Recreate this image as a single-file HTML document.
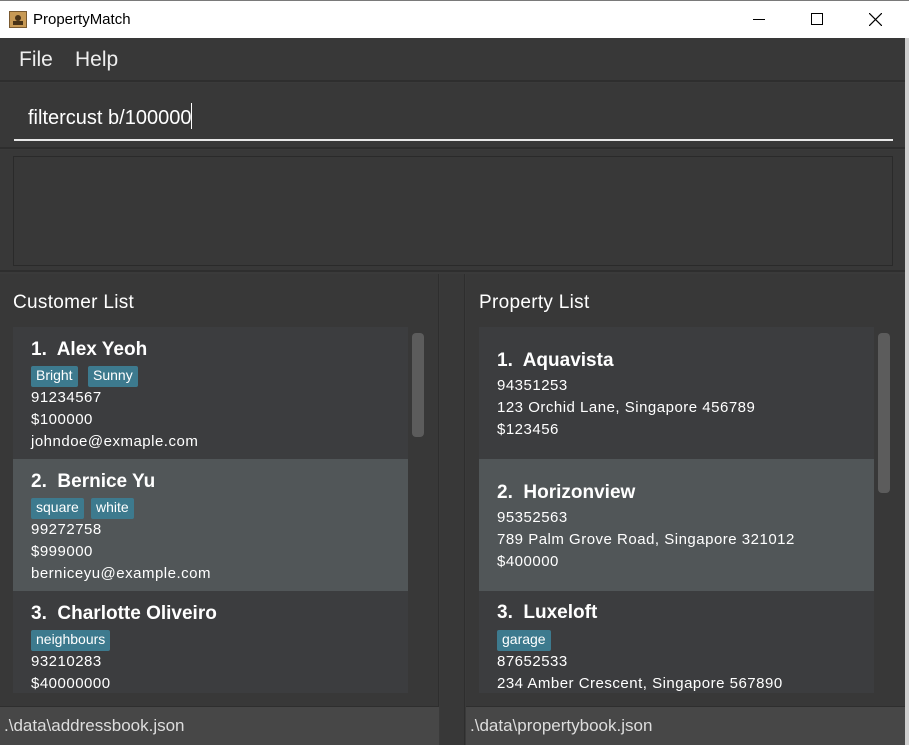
<!DOCTYPE html>
<html><head><meta charset="utf-8"><style>
*{margin:0;padding:0;box-sizing:border-box}
body{width:909px;height:745px;background:#3a3a3a;font-family:"Liberation Sans",sans-serif;position:relative;overflow:hidden;color:#fff}
.a{position:absolute}
.title{left:0;top:0;width:909px;height:38px;background:#fff;border-top:1px solid #7a7a7a}
.menu{left:0;top:38px;width:905px;height:44px;background:#383838;border-bottom:2px solid #2e2e2e}
.cmd{left:0;top:83px;width:905px;height:66px;background:#383838;border-bottom:2px solid #2e2e2e}
.res{left:0;top:150px;width:905px;height:122px;background:#383838;border-bottom:2px solid #2e2e2e}
.panel{top:274px;height:432px;background:#383838}
.list{background:#3c3d3f;overflow:hidden}
.card{position:absolute;left:0;width:395px;height:132px}
.sel{background:#515658}
.nm{position:absolute;left:18px;font-weight:bold;font-size:19px;color:#fff}
.ln{position:absolute;left:18px;font-size:15px;letter-spacing:0.5px;color:#fff}
.tag{position:absolute;height:21px;background:#3d7a8e;border-radius:2px;font-size:14px;padding:1px 5px;color:#fff}
.sb{background:#5c5c5c;border-radius:4px;width:12px}
.status{top:706px;height:39px;background:#474747;font-size:17px;color:#ddd;padding:9px 0 0 4px;border-top:1px solid #2e2e2e}
</style></head><body>
<div class="a title">
 <div class="a" style="left:9px;top:10px;width:18px;height:17px;background:#c89a55;border:1px solid #7a5a30"><div class="a" style="left:5px;top:3px;width:6px;height:6px;background:#4a3418;border-radius:50%"></div><div class="a" style="left:3px;top:9px;width:10px;height:4px;background:#4a3418"></div></div>
 <div class="a" style="left:33px;top:10px;font-size:15px;color:#000">PropertyMatch</div>
 <div class="a" style="left:753px;top:18px;width:12px;height:1px;background:#000"></div>
 <div class="a" style="left:811px;top:12px;width:12px;height:12px;border:1px solid #000"></div>
 <svg class="a" style="left:869px;top:12px" width="13" height="13"><path d="M0 0L13 13M13 0L0 13" stroke="#000" stroke-width="1.2"/></svg>
</div>
<div class="a" style="left:905px;top:38px;width:4px;height:707px;background:#cfcfcf"></div>
<div class="a menu"><span class="a" style="left:19px;top:10px;font-size:21px;color:#eee">File</span><span class="a" style="left:75px;top:10px;font-size:21px;color:#eee">Help</span></div>
<div class="a cmd">
 <div class="a" style="left:28px;top:20px;font-size:20px;color:#fff">filtercust b/100000<span style="display:inline-block;width:1px;height:26px;background:#fff;vertical-align:-5px"></span></div>
 <div class="a" style="left:14px;top:56px;width:879px;height:2px;background:#e8e8e8"></div>
</div>
<div class="a res"><div class="a" style="left:13px;top:6px;width:880px;height:110px;border:1px solid #2a2a2a;background:#383838"></div></div>

<div class="a panel" style="left:0;width:439px;border-right:1px solid #2e2e2e">
 <div class="a" style="left:13px;top:18px;font-size:19px;letter-spacing:0.3px;color:#fff">Customer List</div>
 <div class="a list" style="left:13px;top:53px;width:395px;height:366px">
  <div class="card" style="top:0">
   <div class="nm" style="top:12px">1.&nbsp; Alex Yeoh</div>
   <div class="tag" style="left:18px;top:39px">Bright</div><div class="tag" style="left:75px;top:39px">Sunny</div>
   <div class="ln" style="top:62px">91234567</div><div class="ln" style="top:84px">$100000</div><div class="ln" style="top:106px">johndoe@exmaple.com</div>
  </div>
  <div class="card sel" style="top:132px">
   <div class="nm" style="top:12px">2.&nbsp; Bernice Yu</div>
   <div class="tag" style="left:18px;top:39px">square</div><div class="tag" style="left:78px;top:39px">white</div>
   <div class="ln" style="top:62px">99272758</div><div class="ln" style="top:84px">$999000</div><div class="ln" style="top:106px">berniceyu@example.com</div>
  </div>
  <div class="card" style="top:264px">
   <div class="nm" style="top:12px">3.&nbsp; Charlotte Oliveiro</div>
   <div class="tag" style="left:18px;top:39px">neighbours</div>
   <div class="ln" style="top:62px">93210283</div><div class="ln" style="top:84px">$40000000</div>
  </div>
 </div>
 <div class="a sb" style="left:412px;top:59px;height:104px"></div>
</div>
<div class="a" style="left:440px;top:274px;width:25px;height:471px;background:#383838;border-right:1px solid #2e2e2e"></div>
<div class="a panel" style="left:466px;width:439px">
 <div class="a" style="left:13px;top:18px;font-size:19px;letter-spacing:0.3px;color:#fff">Property List</div>
 <div class="a list" style="left:13px;top:53px;width:395px;height:366px">
  <div class="card" style="top:0">
   <div class="nm" style="top:23px">1.&nbsp; Aquavista</div>
   <div class="ln" style="top:50px">94351253</div><div class="ln" style="top:72px">123 Orchid Lane, Singapore 456789</div><div class="ln" style="top:94px">$123456</div>
  </div>
  <div class="card sel" style="top:132px">
   <div class="nm" style="top:23px">2.&nbsp; Horizonview</div>
   <div class="ln" style="top:50px">95352563</div><div class="ln" style="top:72px">789 Palm Grove Road, Singapore 321012</div><div class="ln" style="top:94px">$400000</div>
  </div>
  <div class="card" style="top:264px">
   <div class="nm" style="top:11px">3.&nbsp; Luxeloft</div>
   <div class="tag" style="left:18px;top:39px">garage</div>
   <div class="ln" style="top:62px">87652533</div><div class="ln" style="top:84px">234 Amber Crescent, Singapore 567890</div>
  </div>
 </div>
 <div class="a sb" style="left:412px;top:59px;height:160px"></div>
</div>
<div class="a status" style="left:0;width:439px">.\data\addressbook.json</div>
<div class="a status" style="left:466px;width:439px">.\data\propertybook.json</div>
</body></html>
